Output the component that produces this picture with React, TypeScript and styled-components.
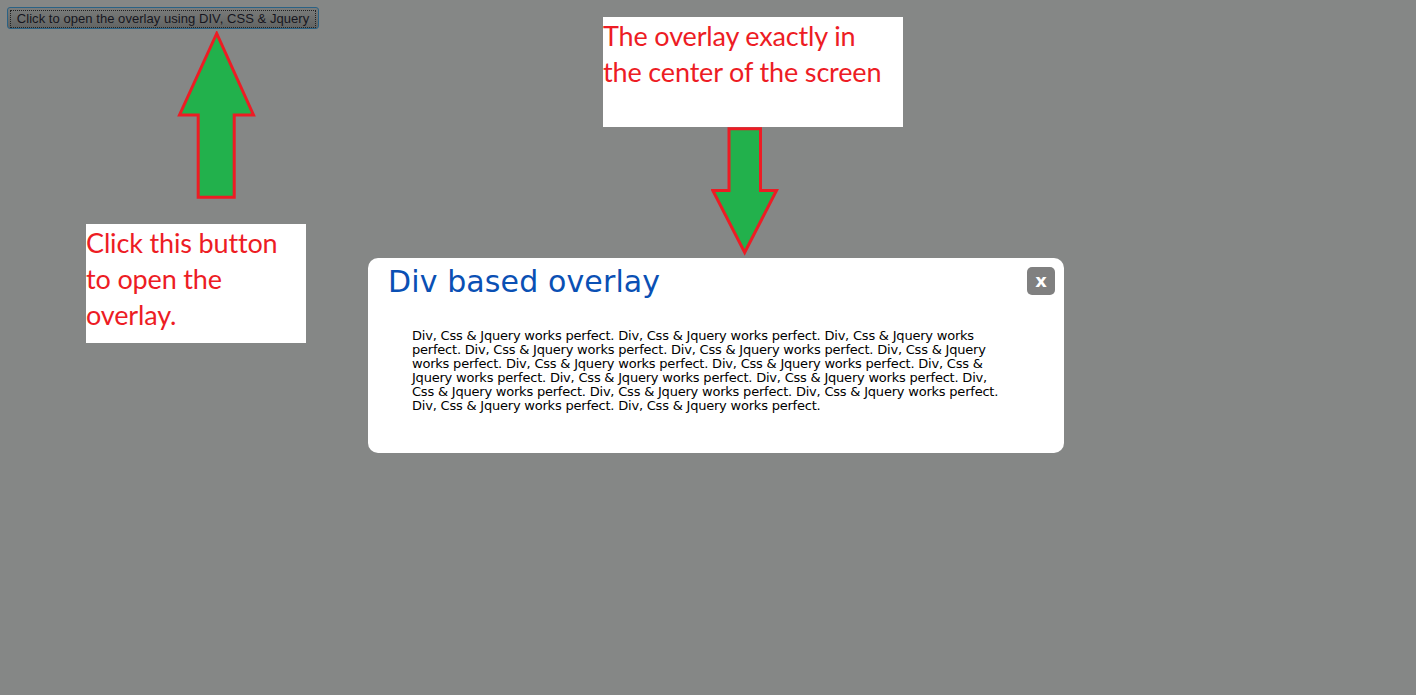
import React from "react";
import styled, { createGlobalStyle } from "styled-components";

const sentence = "Div, Css & Jquery works perfect.";
const bodyText = Array(16).fill(sentence).join(" ");

export default function App() {
  return (
    <>
      <GlobalStyle />
      <Page>
        <LeftColumn>
          <OpenButton>
            <ButtonLabel>Click to open the overlay using DIV, CSS &amp; Jquery</ButtonLabel>
          </OpenButton>
          <UpArrow width="80" height="170" viewBox="0 0 80 170">
            <polygon
              points="39.7,2.5 2.5,84 21.2,84 21.2,166.2 57.2,166.2 57.2,84 76.5,84"
              fill="#22b14c"
              stroke="#ed1c24"
              strokeWidth="3"
            />
          </UpArrow>
          <ButtonNote>Click this button to open the overlay.</ButtonNote>
        </LeftColumn>
        <CenterColumn>
          <CenterNote>The overlay exactly in the center of the screen</CenterNote>
          <DownArrow width="70" height="130" viewBox="0 0 70 130">
            <polygon
              points="18,1.8 49.5,1.8 49.5,63.5 65.5,63.5 33.7,125.5 1.8,63.5 18,63.5"
              fill="#22b14c"
              stroke="#ed1c24"
              strokeWidth="3"
            />
          </DownArrow>
        </CenterColumn>
      </Page>
      <Backdrop>
        <Modal>
          <ModalHeader>
            <Title>Div based overlay</Title>
            <CloseButton>x</CloseButton>
          </ModalHeader>
          <ModalText>{bodyText}</ModalText>
        </Modal>
      </Backdrop>
    </>
  );
}

const GlobalStyle = createGlobalStyle`
  html, body {
    height: 100%;
  }
  body {
    margin: 0;
    background: #858786;
    overflow: hidden;
  }
`;

const Page = styled.main`
  display: flex;
  gap: 284px;
  padding: 7px 0 0 7px;
`;

const LeftColumn = styled.div`
  display: flex;
  flex-direction: column;
  width: 312px;
`;

const CenterColumn = styled.div`
  display: flex;
  flex-direction: column;
  padding-top: 10px;
`;

const OpenButton = styled.button`
  display: block;
  width: 312px;
  height: 22px;
  padding: 2px;
  border: 1px solid #2a6285;
  border-radius: 3px;
  background: linear-gradient(#7a7c7b, #626463);
`;

const ButtonLabel = styled.span`
  display: block;
  height: 16px;
  border: 1px dotted #222;
  font: 13px/15px "Liberation Sans", Arial, sans-serif;
  letter-spacing: 0.05px;
  color: #161620;
  white-space: nowrap;
`;

const Backdrop = styled.div`
  position: fixed;
  inset: 0;
  display: flex;
  justify-content: center;
  align-items: flex-start;
  padding: 258px 0 0 16px;
`;

const Modal = styled.section`
  box-sizing: border-box;
  width: 696px;
  height: 195px;
  padding: 9px 9px 0 20px;
  border-radius: 10px;
  background: #fff;
`;

const ModalHeader = styled.header`
  display: flex;
  justify-content: space-between;
  align-items: flex-start;
`;

const Title = styled.h1`
  margin: 0;
  font: normal 30px/30px "DejaVu Sans", Verdana, sans-serif;
  letter-spacing: 0.12px;
  color: #0a50b4;
`;

const CloseButton = styled.div`
  width: 28px;
  height: 28px;
  border-radius: 5px;
  background: #808080;
  color: #fff;
  font: bold 18px/28px "DejaVu Sans", Verdana, sans-serif;
  text-align: center;
`;

const ModalText = styled.p`
  width: 592px;
  margin: 32px 0 0 24px;
  font: 13px/14px "DejaVu Sans", Verdana, sans-serif;
  letter-spacing: -0.21px;
  color: #000;
`;

const UpArrow = styled.svg`
  display: block;
  flex: none;
  margin: 2px 0 23px 170px;
`;

const DownArrow = styled.svg`
  display: block;
  margin-left: 108px;
`;

const Note = styled.div`
  box-sizing: border-box;
  background: #fff;
  color: #ed1c24;
  font: 27px/36px Lato, "Open Sans", sans-serif;
  letter-spacing: -0.15px;
  padding: 1px 10px 0 0;
`;

const ButtonNote = styled(Note)`
  width: 220px;
  height: 119px;
  margin-left: 79px;
`;

const CenterNote = styled(Note)`
  width: 300px;
  height: 110px;
`;
